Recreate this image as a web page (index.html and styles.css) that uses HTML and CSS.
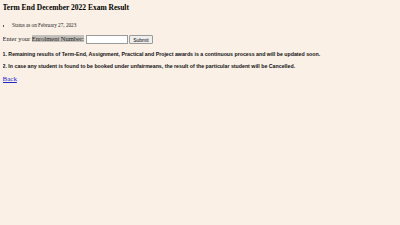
FILE: index.html
```html
<!DOCTYPE html>
<html>
<head>
<meta charset="utf-8">
<title>Term End December 2022 Exam Result</title>
<link rel="stylesheet" href="styles.css">
</head>
<body>
<h2 class="title">Term End December 2022 Exam Result</h2>
<ul class="status">
  <li>Status as on February 27, 2023</li>
</ul>
<form class="search">
  Enter your <span class="label">Enrolment Number:</span> <input class="field" type="text"> <button class="submit" type="button">Submit</button>
</form>
<p class="note">1. Remaining results of Term-End, Assignment, Practical and Project awards is a continuous process and will be updated soon.</p>
<p class="note">2. In case any student is found to be booked under unfairmeans, the result of the particular student will be Cancelled.</p>
<a class="back" href="#">Back</a>
</body>
</html>
```
FILE: styles.css
```css
html, body {
  background: #faf0e6;
}
body {
  margin: 2.5px;
  font-family: "Liberation Serif", "Times New Roman", serif;
  color: #000;
}
.title {
  font-size: 7.5px;
  font-weight: bold;
  margin: 0.8px 0 8.7px;
}
.status {
  margin: 0 0 5px;
  padding-left: 9.5px;
  font-size: 5.2px;
  line-height: 8px;
  color: #222;
}
.search {
  font-size: 6.5px;
  line-height: 10px;
  margin: 0 0 4px;
  color: #222;
}
.label {
  background: #c3bfbb;
}
.field {
  width: 38px;
  height: 7px;
  margin: 0;
  padding: 0 1px;
  border: 0.6px solid #9a9a9a;
  background: #fff;
  font-size: 5px;
  vertical-align: middle;
}
.submit {
  height: 9px;
  margin: 0;
  padding: 0 3px;
  font-family: "Liberation Sans", Arial, sans-serif;
  font-size: 5px;
  border: 0.6px solid #9a9a9a;
  background: #efefef;
  border-radius: 1px;
  vertical-align: middle;
}
.note {
  font-family: "Liberation Sans", Arial, sans-serif;
  font-weight: bold;
  font-size: 5.25px;
  margin: 0;
  line-height: 12px;
  color: #111;
}
.back {
  display: block;
  margin-top: 3px;
  font-size: 7px;
  color: #2222cc;
}
```
